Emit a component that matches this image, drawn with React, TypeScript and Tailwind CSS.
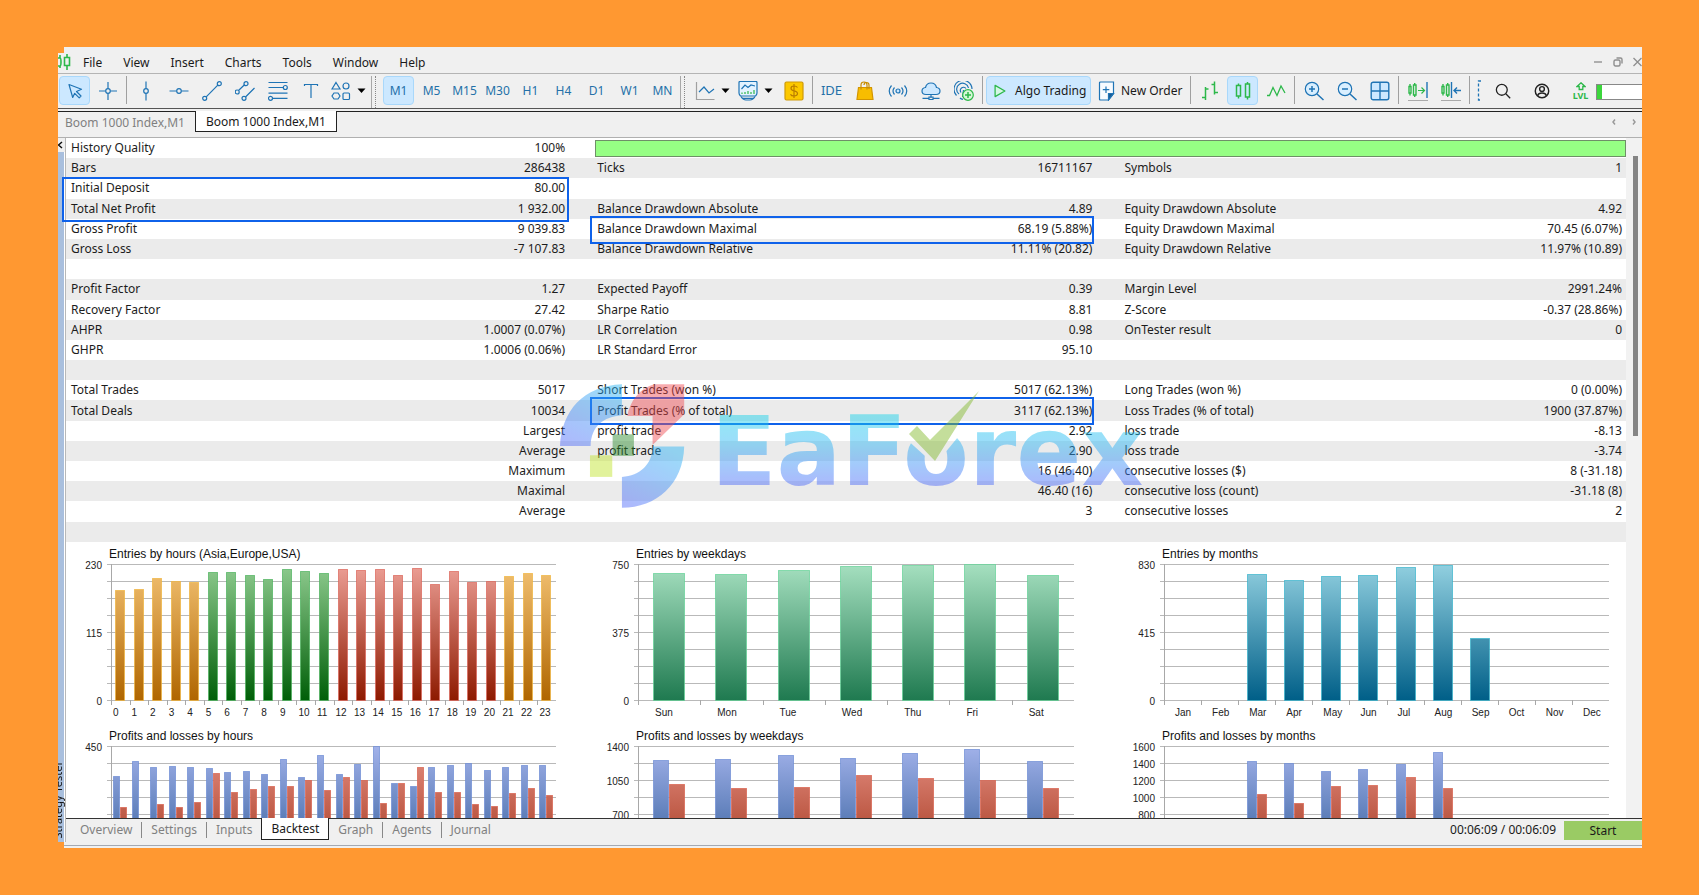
import type { ReactNode } from "react";

const BLUE = "#1f74b5";
const GREEN = "#2db84a";

const MENU = ["File", "View", "Insert", "Charts", "Tools", "Window", "Help"];
const TIMEFRAMES = ["M1", "M5", "M15", "M30", "H1", "H4", "D1", "W1", "MN"];
const TESTER_TABS = ["Overview", "Settings", "Inputs", "Backtest", "Graph", "Agents", "Journal"];

type Row = {
  cells: string[];
  mark?: "first" | "second";
};

// label / value pairs, three per row
const ROWS: Row[] = [
  { cells: ["Bars", "286438", "Ticks", "16711167", "Symbols", "1"] },
  { cells: ["Initial Deposit", "80.00", "", "", "", ""], mark: "first" },
  { cells: ["Total Net Profit", "1 932.00", "Balance Drawdown Absolute", "4.89", "Equity Drawdown Absolute", "4.92"] },
  { cells: ["Gross Profit", "9 039.83", "Balance Drawdown Maximal", "68.19 (5.88%)", "Equity Drawdown Maximal", "70.45 (6.07%)"], mark: "second" },
  { cells: ["Gross Loss", "-7 107.83", "Balance Drawdown Relative", "11.11% (20.82)", "Equity Drawdown Relative", "11.97% (10.89)"] },
  { cells: ["", "", "", "", "", ""] },
  { cells: ["Profit Factor", "1.27", "Expected Payoff", "0.39", "Margin Level", "2991.24%"] },
  { cells: ["Recovery Factor", "27.42", "Sharpe Ratio", "8.81", "Z-Score", "-0.37 (28.86%)"] },
  { cells: ["AHPR", "1.0007 (0.07%)", "LR Correlation", "0.98", "OnTester result", "0"] },
  { cells: ["GHPR", "1.0006 (0.06%)", "LR Standard Error", "95.10", "", ""] },
  { cells: ["", "", "", "", "", ""] },
  { cells: ["Total Trades", "5017", "Short Trades (won %)", "5017 (62.13%)", "Long Trades (won %)", "0 (0.00%)"] },
  { cells: ["Total Deals", "10034", "Profit Trades (% of total)", "3117 (62.13%)", "Loss Trades (% of total)", "1900 (37.87%)"], mark: "second" },
  { cells: ["", "Largest", "profit trade", "2.92", "loss trade", "-8.13"] },
  { cells: ["", "Average", "profit trade", "2.90", "loss trade", "-3.74"] },
  { cells: ["", "Maximum", "", "16 (46.40)", "consecutive losses ($)", "8 (-31.18)"] },
  { cells: ["", "Maximal", "", "46.40 (16)", "consecutive loss (count)", "-31.18 (8)"] },
  { cells: ["", "Average", "", "3", "consecutive losses", "2"] },
  { cells: ["", "", "", "", "", ""] },
];

type Fill = { id: string; from: string; to: string; edge: string };

const ORANGE_FILL: Fill = { id: "orange", from: "#f3c274", to: "#b06600", edge: "#f0b43c" };
const GREEN_FILL: Fill = { id: "green", from: "#90cc90", to: "#005f08", edge: "#4cb25c" };
const RED_FILL: Fill = { id: "red", from: "#eda097", to: "#8e1a00", edge: "#dc6458" };
const MINT_FILL: Fill = { id: "mint", from: "#a6e0c0", to: "#1f7a50", edge: "#62d296" };
const TEAL_FILL: Fill = { id: "teal", from: "#92d0e0", to: "#005f88", edge: "#38b4cc" };
const PROFIT_FILL: Fill = { id: "profit", from: "#a2b2ea", to: "#20508e", edge: "#6c8cd4" };
const LOSS_FILL: Fill = { id: "loss", from: "#e69084", to: "#98280c", edge: "#d8604c" };
const FILLS = [ORANGE_FILL, GREEN_FILL, RED_FILL, MINT_FILL, TEAL_FILL, PROFIT_FILL, LOSS_FILL];

const HOURS = Array.from({ length: 24 }, (_, i) => String(i));
const DAYS = ["Sun", "Mon", "Tue", "Wed", "Thu", "Fri", "Sat"];
const MONTHS = ["Jan", "Feb", "Mar", "Apr", "May", "Jun", "Jul", "Aug", "Sep", "Oct", "Nov", "Dec"];

function sessionFill(hour: number) {
  if (hour >= 5 && hour < 12) return GREEN_FILL;
  if (hour >= 12 && hour < 21) return RED_FILL;
  return ORANGE_FILL;
}

const ENTRIES_HOURS = [186, 187, 207, 202, 200, 216, 216, 211, 205, 221, 218, 215, 222, 220, 222, 211, 223, 196, 218, 200, 201, 210, 214, 211];
const ENTRIES_DAYS = [701, 697, 715, 737, 746, 750, 688];
const ENTRIES_MONTHS = [0, 0, 769, 732, 755, 765, 810, 826, 381, 0, 0, 0];

const PROFIT_HOURS = [351, 402, 381, 384, 381, 377, 363, 366, 358, 406, 347, 421, 358, 390, 450, 328, 316, 382, 386, 393, 370, 382, 386, 386];
const LOSS_HOURS = [247, 0, 259, 247, 264, 361, 297, 309, 319, 319, 337, 306, 348, 337, 263, 328, 380, 297, 299, 259, 251, 293, 310, 287];
const PROFIT_DAYS = [1259, 1263, 1311, 1280, 1325, 1366, 1249];
const LOSS_DAYS = [1006, 965, 982, 1102, 1068, 1047, 965];
const PROFIT_MONTHS = [0, 0, 1428, 1400, 1310, 1326, 1385, 1530, 0, 0, 0, 0];
const LOSS_MONTHS = [0, 0, 1032, 935, 1126, 1138, 1240, 1103, 0, 0, 0, 0];

function Icon({ size = 20, children }: { size?: number; children: ReactNode }) {
  return (
    <svg
      width={size}
      height={size}
      viewBox="0 0 20 20"
      fill="none"
      stroke={BLUE}
      strokeWidth={1.2}
      aria-hidden="true"
      className="shrink-0"
    >
      {children}
    </svg>
  );
}

function Tool({ label, active, children }: { label: string; active?: boolean; children: ReactNode }) {
  return (
    <button
      aria-label={label}
      className={`flex h-[29px] w-[31px] shrink-0 items-center justify-center border text-[12px] text-[#2470a8] ${
        active ? "rounded-sm border-[#a9d8fb] bg-[#cce8ff]" : "border-transparent"
      }`}
    >
      {children}
    </button>
  );
}

function DropTool({ label, children }: { label: string; children: ReactNode }) {
  return (
    <button aria-label={label} className="flex h-[29px] w-[41px] shrink-0 items-center gap-1.5 pl-[3px]">
      {children}
      <svg width="9" height="6" viewBox="0 0 9 6" aria-hidden="true" className="shrink-0">
        <path d="M0.5 0.5h8L4.5 5Z" fill="#000" />
      </svg>
    </button>
  );
}

function Sep() {
  return <span className="mx-px h-7 w-px shrink-0 bg-[#a0a0a0]" />;
}

function Grip() {
  return (
    <span className="mr-[5px] flex h-8 shrink-0 gap-[3px]">
      <span className="w-px bg-[#a8a8a8]" />
      <span className="border-l border-dotted border-[#888]" />
    </span>
  );
}

function MenuBar() {
  return (
    <div className="flex h-[27px] shrink-0 items-center border-b border-[#b4b4b4] pt-1">
      <svg width="14" height="18" viewBox="0 0 14 18" fill="none" stroke={GREEN} strokeWidth="1.6" aria-hidden="true">
        <path d="M-1 5h3q1 0 1 4t-1 4h-3M2 2v3M2 13v2" />
        <path d="M6.5 4.500h5v8h-5zM9 1v3.500M9 12.500V17" />
      </svg>
      <nav className="flex gap-[21px] pl-[11px] pt-0.5 text-[12px] text-[#1a1a1a]">
        {MENU.map((item) => (
          <button key={item}>{item}</button>
        ))}
      </nav>
      <div className="ml-auto flex items-center gap-2.5">
        <button aria-label="Minimize">
          <svg width="10" height="10" viewBox="0 0 10 10" stroke="#999" strokeWidth="1.400" aria-hidden="true">
            <path d="M1 5h8" />
          </svg>
        </button>
        <button aria-label="Restore">
          <svg width="10" height="10" viewBox="0 0 10 10" fill="none" stroke="#8e8e8e" strokeWidth="1.400" aria-hidden="true">
            <rect x="1" y="3" width="6" height="6" rx="1.500" />
            <path d="M3.500 1h4q1.500 0 1.500 1.500v4" />
          </svg>
        </button>
        <button aria-label="Close">
          <svg width="9" height="10" viewBox="0 0 9 10" stroke="#8e8e8e" strokeWidth="1.300" aria-hidden="true">
            <path d="M0.500 1l8 8M8.500 1l-8 8" />
          </svg>
        </button>
      </div>
    </div>
  );
}

function Toolbar() {
  return (
    <div className="flex h-[35px] shrink-0 items-start gap-0.5 border-b border-[#555] pl-px pt-0.5">
      <Tool label="Cursor" active>
        <Icon>
          <path d="M4 3.500l12.500 4.800-5 2.200 4.500 4.500-1.800 1.800-4.500-4.500-2 4.200Z" strokeLinejoin="round" />
        </Icon>
      </Tool>
      <Tool label="Crosshair">
        <Icon>
          <path d="M10 1v6.500M10 12.500V19M1 10h6.500M12.500 10H19" />
          <circle cx="10" cy="10" r="2.300" />
        </Icon>
      </Tool>
      <Sep />
      <Tool label="Vertical line">
        <Icon>
          <path d="M10 0.500v7M10 12.500v7" />
          <circle cx="10" cy="10" r="2.300" />
        </Icon>
      </Tool>
      <Tool label="Horizontal line">
        <Icon>
          <path d="M0.500 10h7M12.500 10h7" />
          <circle cx="10" cy="10" r="2.300" />
        </Icon>
      </Tool>
      <Tool label="Trend line">
        <Icon>
          <path d="M4.200 15.800L15.800 4.200" />
          <circle cx="2.700" cy="17.300" r="2" />
          <circle cx="17.300" cy="2.700" r="2" />
        </Icon>
      </Tool>
      <Tool label="Channel">
        <Icon>
          <path d="M3.500 9.500L9.500 3.700M10.500 16L19.500 7" />
          <circle cx="2.200" cy="11" r="2" />
          <circle cx="11" cy="2.700" r="2" />
          <circle cx="9" cy="17.300" r="2" />
        </Icon>
      </Tool>
      <Tool label="Fibonacci">
        <Icon>
          <path d="M0.500 1.500h19M0.500 6.500h14.500M0.500 12.200h19M4.500 17.300h15" />
          <circle cx="17.300" cy="6.500" r="2" />
          <circle cx="2.500" cy="17.300" r="2" />
        </Icon>
      </Tool>
      <Tool label="Text">
        <Icon>
          <path d="M3.500 5V3.500h13V5M10 3.500V17" />
        </Icon>
      </Tool>
      <DropTool label="Shapes">
        <Icon>
          <path d="M5 1.500L9 8H1ZM3 12h4l2 3-2 3H3l-2-3Z" />
          <circle cx="15" cy="5" r="3" />
          <rect x="12" y="12" width="6.500" height="6.500" rx="1" />
        </Icon>
      </DropTool>
      <Grip />
      {TIMEFRAMES.map((tf, i) => (
        <Tool key={tf} label={tf} active={i === 0}>
          {tf}
        </Tool>
      ))}
      <Grip />
      <DropTool label="Chart type">
        <Icon>
          <path d="M1.500 1v17.500h18" stroke="#a0a0a0" />
          <path d="M4 11l5-5 5 6 5-4" />
        </Icon>
      </DropTool>
      <DropTool label="Indicators">
        <Icon>
          <path d="M1 1.500q0-1 1-1h16q1 0 1 1v10.500q0 1.500-1.500 3H2.500Q1 13.500 1 12Z" fill="#e3f3ff" />
          <path d="M3.500 8l3.500-4 3 2.500L13 4l4 1M3 15.500q2 3.500 5 3.500h4q3 0 5-3.500M5 17.300h10" />
          <path d="M4 13v-1.500M7 13v-2M10 13v-3M13 13v-2M16 13v-4" stroke={GREEN} />
        </Icon>
      </DropTool>
      <Tool label="Market depth">
        <Icon>
          <rect x="1" y="1" width="18" height="18" rx="1.500" fill="#fcc800" stroke="#cf9a08" />
          <path d="M13.500 6.500Q12.500 5 10 5 7 5 7 7.300q0 2 3 2.500 3.500.6 3.500 2.800 0 2.400-3.500 2.400-2.800 0-3.500-1.800M10 3v14" stroke="#b97c00" />
        </Icon>
      </Tool>
      <Sep />
      <Tool label="IDE">
        <span className="text-[13px]">IDE</span>
      </Tool>
      <Tool label="Market">
        <Icon>
          <path d="M3.500 6.500h13l1.500 12H2Z" fill="#f8bd00" stroke="#d39500" />
          <path d="M6 8.500V4q0-3 3-3t3 3v4.500M9 4q0-2.500 2.500-2.500T14 4v4" stroke="#c98d00" />
        </Icon>
      </Tool>
      <Tool label="Signals">
        <Icon>
          <circle cx="10" cy="10" r="2" fill="#cce8ff" />
          <path d="M6.500 6.500q-3 3.500 0 7M13.500 6.500q3 3.500 0 7M3.500 4.500q-4.500 5.500 0 11M16.500 4.500q4.500 5.500 0 11" />
        </Icon>
      </Tool>
      <Tool label="VPS">
        <Icon>
          <path d="M5 13.500q-4 0-4-3.500 0-3 3.500-3.500 1-4.500 5.500-4.500 4.500 0 5.500 4.500 3.500.5 3.500 3.500 0 3.500-4 3.500Z" fill="#cce8ff" />
          <path d="M10 13.500V17M1.500 17.300h6.500M12 17.300h6.500M8 16h4v2.500H8Z" />
        </Icon>
      </Tool>
      <Tool label="Copy trading">
        <Icon>
          <path d="M2.500 14.500A9 9 0 1 1 18 8M5 13a6 6 0 1 1 9.500-6M7 11.500A3.200 3.200 0 1 1 12 7.500M6 17q1 1 3 1.300M9.500 9l-1 7" />
          <circle cx="14" cy="14" r="5.300" fill="#d7f8d8" stroke={GREEN} />
          <path d="M14 11v6M11 14h6" stroke={GREEN} strokeWidth="1.500" />
        </Icon>
      </Tool>
      <Sep />
      <button className="flex h-[29px] w-[105px] shrink-0 items-center gap-2 rounded-sm border border-[#a9d8fb] bg-[#cce8ff] pl-1.5 text-[12px] text-[#1a1a1a]">
        <Icon size={14}>
          <path d="M3 2v16l14-8Z" stroke={GREEN} strokeWidth="1.800" strokeLinejoin="round" fill="#d4f7e4" />
        </Icon>
        Algo Trading
      </button>
      <button className="flex h-[29px] w-[94px] shrink-0 items-center gap-1 pl-1 text-[12px] text-[#1a1a1a]">
        <Icon>
          <path d="M3.500 1h13v11.500L11.500 19h-8q-1 0-1-1V2q0-1 1-1ZM16.500 2v11" fill="#f7fbff" />
          <path d="M16.500 12.500h-5V19Z" fill="#1d5c94" />
          <path d="M9 5.500v6.500M5.800 8.700h6.500" />
        </Icon>
        New Order
      </button>
      <Sep />
      <Tool label="Bar chart">
        <Icon>
          <path d="M5.500 6v13M2 16.500h3.500M5.500 8h3M14.500 0.500v13M11.500 3.500h3M14.500 11.500h3.500" stroke={GREEN} strokeWidth="1.500" />
        </Icon>
      </Tool>
      <Tool label="Candlesticks" active>
        <Icon>
          <path d="M3.500 4.500h4v10.500h-4ZM5.500 2.500v2M5.500 15v2.500M12.500 3h4v13h-4ZM14.500 1v2M14.500 16v2.500" stroke={GREEN} strokeWidth="1.500" />
        </Icon>
      </Tool>
      <Tool label="Line chart">
        <Icon>
          <path d="M1 14.500h2.500L7 6.500l4 8 4-9.500 4 7" stroke={GREEN} strokeWidth="1.300" />
        </Icon>
      </Tool>
      <Sep />
      <Tool label="Zoom in">
        <Icon>
          <circle cx="8" cy="8" r="6.700" fill="#d9efff" />
          <path d="M13 13l6.500 6M8 5v6M5 8h6" strokeWidth="1.500" />
        </Icon>
      </Tool>
      <Tool label="Zoom out">
        <Icon>
          <circle cx="8" cy="8" r="6.700" fill="#d9efff" />
          <path d="M13 13l6.500 6M5 8h6" strokeWidth="1.500" />
        </Icon>
      </Tool>
      <Tool label="Tile windows">
        <Icon>
          <rect x="1.200" y="1.200" width="17.600" height="17.600" rx="2" fill="#cce8ff" strokeWidth="1.400" />
          <path d="M10 1v18M1 10h18" strokeWidth="1.400" />
        </Icon>
      </Tool>
      <Sep />
      <Tool label="Auto scroll">
        <Icon>
          <path d="M1 5.500h2V12H1ZM5.500 4h2.500v10H5.500ZM2 3v2.500M2 12v2.500M6.700 2v2M6.700 14v2" stroke={GREEN} strokeWidth="1.400" />
          <path d="M10 9.500h6M13.500 6.500l3 3-3 3" stroke={GREEN} />
          <path d="M19 1v16" strokeWidth="1.400" />
          <path d="M0 19.500h20" stroke="#aaa" />
        </Icon>
      </Tool>
      <Tool label="Chart shift">
        <Icon>
          <path d="M1 5.500h2V12H1ZM5.500 4h2.500v10H5.500ZM2 3v2.500M2 12v2.500M6.700 2v2M6.700 14v2" stroke={GREEN} strokeWidth="1.400" />
          <path d="M10.500 1v16M13 9.500h7M16 6.500l-3 3 3 3" strokeWidth="1.400" />
          <path d="M0 19.500h20" stroke="#aaa" />
        </Icon>
      </Tool>
      <Sep />
      <svg width="12" height="29" viewBox="0 0 12 29" fill="none" stroke={BLUE} strokeWidth="1.300" aria-hidden="true" className="shrink-0">
        <path d="M8 5H5.500v19H8" strokeDasharray="3 2" />
      </svg>
      <div className="flex min-w-0 flex-1 gap-2">
        <Tool label="Search">
          <Icon size={16}>
            <circle cx="8.500" cy="8.500" r="6.800" stroke="#222" strokeWidth="1.600" />
            <path d="M13.500 13.500l5.500 5.500" stroke="#222" strokeWidth="1.600" />
          </Icon>
        </Tool>
        <Tool label="Account">
          <Icon size={16}>
            <g stroke="#222" strokeWidth="1.800">
              <circle cx="10" cy="10" r="8.400" />
              <circle cx="10" cy="7.500" r="3" />
              <path d="M4.500 16q1-3.500 5.500-3.500t5.500 3.500" />
            </g>
          </Icon>
        </Tool>
        <div className="flex min-w-0 flex-1">
          <div className="flex w-[31px] shrink-0 flex-col items-center pt-1.5">
            <svg width="10" height="9" viewBox="0 0 10 9" fill="none" stroke={GREEN} strokeWidth="1.300" aria-hidden="true">
              <path d="M5 0.800l4 3.700H6.800v3H3.200v-3H1Z" />
            </svg>
            <span className="text-[9px] font-bold leading-[10px] text-[#2db84a]">LVL</span>
          </div>
          <div className="mt-2 flex h-4 flex-1 border border-r-0 border-[#888] bg-white">
            <span className="w-[5px] bg-[#3cd63c]" />
          </div>
        </div>
      </div>
    </div>
  );
}

function ChartTabs() {
  return (
    <div className="mt-0.5 flex h-[27px] shrink-0 items-start border-b border-t border-b-[#b0b0b0] border-t-[#222] text-[12px]">
      <button className="h-[22px] pl-[7px] text-[#808080]">Boom 1000 Index,M1</button>
      <button className="-mt-px ml-2.5 h-[21px] border border-t-0 border-[#222] bg-white px-2.5 pt-0.5 leading-[18px] text-[#1a1a1a]">
        Boom 1000 Index,M1
      </button>
      <div className="ml-auto flex gap-4 pr-[5px] pt-1.5 text-[#9a9a9a]">
        <button aria-label="Previous tab">
          <svg width="5" height="8" viewBox="0 0 5 8" fill="none" stroke="currentColor" strokeWidth="1.500" aria-hidden="true">
            <path d="M4 1.500L2 4 4 6.500" />
          </svg>
        </button>
        <button aria-label="Next tab">
          <svg width="5" height="8" viewBox="0 0 5 8" fill="none" stroke="currentColor" strokeWidth="1.500" aria-hidden="true">
            <path d="M1 1.500L3 4 1 6.500" />
          </svg>
        </button>
      </div>
    </div>
  );
}

function Report() {
  return (
    <table className="h-[404px] w-full table-fixed border-collapse text-[12px] leading-4 text-[#1c1c1c]">
      <colgroup>
        <col className="w-[16%]" />
        <col className="w-[16%]" />
        <col className="w-[16.9%]" />
        <col className="w-[16.9%]" />
        <col className="w-[17.1%]" />
        <col className="w-[17.1%]" />
      </colgroup>
      <tbody>
        <tr className="h-5">
          <th scope="row" className="py-0 pl-[5px] text-left font-normal">History Quality</th>
          <td className="p-0 text-right">100%</td>
          <td colSpan={4} className="py-0 pl-[30px] pr-0">
            <div className="h-[17px] border border-[#6f8f68] bg-[#96ff84]" />
          </td>
        </tr>
        {ROWS.map((row, r) => (
          <tr key={r} className={`h-5 ${r % 2 === 0 ? "bg-[#ebebeb]" : "bg-white"}`}>
            {row.cells.map((cell, c) => {
              if (c % 2 === 1) {
                return (
                  <td key={c} className={`py-0 pl-0 text-right ${c === 5 ? "pr-1" : "pr-0"}`}>
                    {cell}
                  </td>
                );
              }
              return (
                <th key={c} scope="row" className={`relative py-0 text-left font-normal ${c === 0 ? "pl-[5px]" : "pl-8"}`}>
                  {cell}
                  {row.mark === "first" && c === 0 && (
                    <span className="absolute -left-1 -top-px z-10 h-[45px] w-[calc(200%+8px)] border-2 border-[#0f62ea]" />
                  )}
                  {row.mark === "second" && c === 2 && (
                    <span className="absolute -top-[3px] left-[25px] z-10 h-[28px] w-[calc(200%-23px)] border-2 border-[#0f62ea]" />
                  )}
                </th>
              );
            })}
          </tr>
        ))}
      </tbody>
    </table>
  );
}

type Series = { values: number[]; fill: (i: number) => Fill };

type ChartProps = {
  title: string;
  max: number;
  labelEvery: number;
  plotWidth: number;
  categories: string[];
  showCategories?: boolean;
  labelOffset: number;
  barOffset: number;
  barWidth: number;
  series: Series[];
};

const PLOT_TOP = 22;
const PLOT_HEIGHT = 136;
const AXIS_X = 45;
const STEPS = 8;
// the lower charts are scrolled out of the panel after this many grid lines
const VISIBLE_STEPS = 4;

function Chart({ title, max, labelEvery, plotWidth, categories, showCategories, labelOffset, barOffset, barWidth, series }: ChartProps) {
  const slot = plotWidth / categories.length;
  const bottom = PLOT_TOP + PLOT_HEIGHT;
  const steps = showCategories ? STEPS : VISIBLE_STEPS;

  return (
    <svg className="block w-full" height="182" role="img" aria-label={title} fontFamily="Liberation Sans, Arial, sans-serif" fontSize="10">
      <text x={AXIS_X - 2} y="16" fontSize="12" fill="#111">
        {title}
      </text>
      {Array.from({ length: steps + 1 }, (_, i) => {
        const y = PLOT_TOP + (PLOT_HEIGHT / STEPS) * i;
        return (
          <g key={i}>
            <rect x={AXIS_X - 4} y={y} width={plotWidth + 4} height="1" fill="#b9b9b9" />
            {i % labelEvery === 0 && (
              <text x={AXIS_X - 9} y={y + 5} textAnchor="end" fill="#222">
                {Math.round(max - (max / STEPS) * i)}
              </text>
            )}
          </g>
        );
      })}
      <rect x={AXIS_X} y={PLOT_TOP} width="1" height={PLOT_HEIGHT} fill="#a8a8a8" />
      {categories.map((name, i) => (
        <g key={name}>
          {showCategories && (
            <>
              <rect x={Math.round(AXIS_X + slot * i)} y={bottom} width="1" height="5" fill="#a8a8a8" />
              <text x={AXIS_X + slot * i + labelOffset} y={bottom + 16} fill="#222">
                {name}
              </text>
            </>
          )}
          {series.map((s, k) => {
            const value = s.values[i];
            if (!value) return null;
            const fill = s.fill(i);
            const height = Math.round((value / max) * PLOT_HEIGHT);
            const x = Math.round(AXIS_X + slot * i + barOffset) + k * barWidth;
            return (
              <rect
                key={k}
                x={x + 0.5}
                y={bottom - height + 0.5}
                width={barWidth - 1}
                height={height}
                fill={`url(#${fill.id})`}
                stroke={fill.edge}
                strokeOpacity="0.7"
              />
            );
          })}
        </g>
      ))}
    </svg>
  );
}

function Gradients() {
  return (
    <svg width="0" height="0" className="absolute" aria-hidden="true">
      <defs>
        {FILLS.map((f) => (
          <linearGradient key={f.id} id={f.id} gradientUnits="userSpaceOnUse" x1="0" x2="0" y1={PLOT_TOP} y2={PLOT_TOP + PLOT_HEIGHT}>
            <stop offset="0" stopColor={f.from} />
            <stop offset="1" stopColor={f.to} />
          </linearGradient>
        ))}
      </defs>
    </svg>
  );
}

function profitAndLoss(profit: number[], loss: number[]): Series[] {
  return [
    { values: profit, fill: () => PROFIT_FILL },
    { values: loss, fill: () => LOSS_FILL },
  ];
}

function Charts() {
  const hours = { plotWidth: 445, categories: HOURS, labelOffset: 2 };
  const days = { plotWidth: 436, categories: DAYS, labelOffset: 17 };
  const months = { plotWidth: 445, categories: MONTHS, labelOffset: 11 };

  return (
    <div className="flex min-h-0 flex-1 overflow-hidden bg-white">
      <Gradients />
      <div className="w-[33.75%] shrink-0">
        <Chart {...hours} showCategories title="Entries by hours (Asia,Europe,USA)" max={230} labelEvery={4} barOffset={4} barWidth={10} series={[{ values: ENTRIES_HOURS, fill: sessionFill }]} />
        <Chart {...hours} title="Profits and losses by hours" max={450} labelEvery={8} barOffset={2} barWidth={7} series={profitAndLoss(PROFIT_HOURS, LOSS_HOURS)} />
      </div>
      <div className="w-[33.75%] shrink-0">
        <Chart {...days} showCategories title="Entries by weekdays" max={750} labelEvery={4} barOffset={15} barWidth={32} series={[{ values: ENTRIES_DAYS, fill: () => MINT_FILL }]} />
        <Chart {...days} title="Profits and losses by weekdays" max={1400} labelEvery={2} barOffset={15} barWidth={16} series={profitAndLoss(PROFIT_DAYS, LOSS_DAYS)} />
      </div>
      <div className="w-[33.75%] shrink-0">
        <Chart {...months} showCategories title="Entries by months" max={830} labelEvery={4} barOffset={9} barWidth={20} series={[{ values: ENTRIES_MONTHS, fill: () => TEAL_FILL }]} />
        <Chart {...months} title="Profits and losses by months" max={1600} labelEvery={1} barOffset={9} barWidth={10} series={profitAndLoss(PROFIT_MONTHS, LOSS_MONTHS)} />
      </div>
    </div>
  );
}

function Watermark() {
  return (
    <svg
      width="600"
      height="140"
      viewBox="0 0 600 140"
      aria-hidden="true"
      className="pointer-events-none absolute left-[493px] top-[237px] z-20"
    >
      <defs>
        <linearGradient id="word" gradientUnits="userSpaceOnUse" x1="0" x2="0" y1="40" y2="112">
          <stop offset="0" stopColor="#14d2ea" />
          <stop offset="0.400" stopColor="#28b4f4" />
          <stop offset="1" stopColor="#4a62fa" />
        </linearGradient>
        <linearGradient id="arc" x1="0.700" x2="0.200" y1="0" y2="1">
          <stop offset="0" stopColor="#28b4f4" />
          <stop offset="1" stopColor="#4c68fa" />
        </linearGradient>
        <mask id="tick">
          <rect width="600" height="140" fill="#fff" />
          <path d="M345 62L356 40 418 12 399 62 376 90Z" fill="#000" />
        </mask>
      </defs>
      <g opacity="0.460">
        <g transform="translate(-9 -4) scale(0.333)">
          <path d="M30 225C35 120 100 45 216 40V133C160 138 124 165 122 225Z" fill="url(#arc)" />
          <path d="M308 227H403C400 340 320 411 216 411V318C270 315 308 280 308 227Z" fill="url(#arc)" />
          <path d="M312 40H403V130L308 222V135H232C240 90 270 52 312 40Z" fill="#f04a50" />
          <path d="M188 190h64v65h-64Z" fill="#2a8a2a" />
          <path d="M120 253h67v65h-67Z" fill="#c0e428" />
        </g>
        <g mask="url(#tick)">
          <text x="152" y="110" fontFamily="DejaVu Sans, sans-serif" fontWeight="700" fontSize="96" fill="url(#word)">
            EaForex
          </text>
        </g>
        <path d="M350 59L358 51 371 65 420 16 376 86Z" fill="#80b828" />
      </g>
    </svg>
  );
}

function TesterBar() {
  return (
    <div className="flex h-6 shrink-0 items-start border-t border-[#333] bg-[#f0f0f0] text-[12px]">
      <nav className="flex items-start pl-[5px] text-[#808080]">
        {TESTER_TABS.map((tab) => {
          if (tab === "Backtest") {
            return (
              <button key={tab} className="-mt-px h-[22px] border border-t-0 border-[#222] bg-white px-[9px] text-[#1a1a1a]">
                {tab}
              </button>
            );
          }
          const divider = tab !== "Inputs" && tab !== "Journal";
          return (
            <button key={tab} className={`mt-[3px] h-4 px-[9px] leading-4 ${divider ? "border-r border-[#888]" : ""}`}>
              {tab}
            </button>
          );
        })}
      </nav>
      <span className="ml-auto pr-2 leading-[22px] text-[#1a1a1a]">00:06:09 / 00:06:09</span>
      <button className="mt-0.5 h-[19px] w-[78px] bg-[#9acb64] text-[#1a1a1a]">Start</button>
    </div>
  );
}

export default function App() {
  return (
    <div className="flex h-screen flex-col bg-[#ff9831] pb-[47px] pl-[58px] pr-[57px] pt-[47px] font-['Noto_Sans','Open_Sans',sans-serif]">
      <main className="flex min-h-0 flex-1 flex-col overflow-hidden bg-[#f0f0f0] [clip-path:polygon(6px_0,100%_0,100%_100%,6px_100%,6px_calc(100%-6px),0_calc(100%-6px),0_6px,6px_6px)]">
        <MenuBar />
        <Toolbar />
        <ChartTabs />
        <div className="flex min-h-0 flex-1">
          <aside className="flex w-2 shrink-0 flex-col overflow-hidden border-r border-[#b8b8b8]">
            <button aria-label="Close panel" className="h-3.5 shrink-0">
              <svg width="5" height="8" viewBox="0 0 5 8" fill="none" stroke="#111" strokeWidth="1.500" aria-hidden="true">
                <path d="M4 1L0.500 4 4 7" />
              </svg>
            </button>
            <div className="flex flex-1 flex-col items-end justify-end border-r border-white bg-[#a9bfdd] pb-1">
              <span className="rotate-180 text-[11px] leading-[13px] text-[#111] [writing-mode:vertical-rl]">Strategy Tester</span>
            </div>
          </aside>
          <div className="flex min-w-0 flex-1 flex-col">
            <div className="flex min-h-0 flex-1">
              <div className="relative flex min-w-0 flex-1 flex-col bg-white">
                <Report />
                <Charts />
                <Watermark />
              </div>
              <div className="w-4 shrink-0 bg-[#f2f2f2] pl-[7px] pt-[18px]">
                <div className="h-[280px] w-[5px] bg-[#858585]" />
              </div>
            </div>
            <TesterBar />
          </div>
        </div>
        <div className="flex h-1.5 shrink-0 flex-col justify-center">
          <div className="h-px bg-[#a4a9b2]" />
        </div>
      </main>
    </div>
  );
}
